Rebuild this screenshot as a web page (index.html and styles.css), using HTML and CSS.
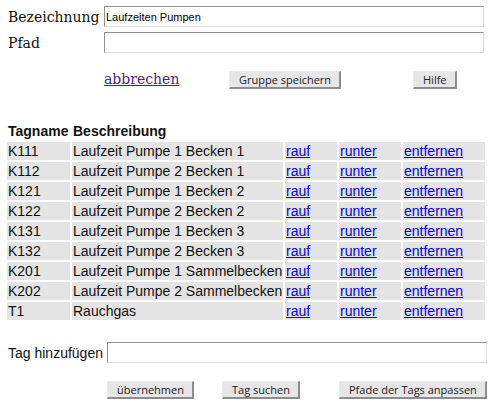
FILE: index.html
```html
<!DOCTYPE html>
<html lang="de">
<head>
<meta charset="utf-8">
<title>Gruppe bearbeiten</title>
<link rel="stylesheet" href="styles.css">
</head>
<body>
<form class="group-form">
  <div class="fields">
    <label class="field-label" for="bez">Bezeichnung</label>
    <input class="text-input" id="bez" type="text" value="Laufzeiten Pumpen">
    <label class="field-label" for="pfad">Pfad</label>
    <input class="text-input" id="pfad" type="text" value="">
  </div>
  <div class="actions">
    <a class="cancel-link" href="#">abbrechen</a>
    <span><button class="btn" type="button">Gruppe speichern</button></span>
    <span><button class="btn" type="button">Hilfe</button></span>
  </div>
</form>

<table class="tags">
  <thead>
    <tr>
      <th class="c-name">Tagname</th>
      <th class="c-desc">Beschreibung</th>
      <th class="c-up"></th>
      <th class="c-down"></th>
      <th class="c-del"></th>
    </tr>
  </thead>
  <tbody>
    <tr><td>K111</td><td>Laufzeit Pumpe 1 Becken 1</td><td><a href="#">rauf</a></td><td><a href="#">runter</a></td><td><a href="#">entfernen</a></td></tr>
    <tr><td>K112</td><td>Laufzeit Pumpe 2 Becken 1</td><td><a href="#">rauf</a></td><td><a href="#">runter</a></td><td><a href="#">entfernen</a></td></tr>
    <tr><td>K121</td><td>Laufzeit Pumpe 1 Becken 2</td><td><a href="#">rauf</a></td><td><a href="#">runter</a></td><td><a href="#">entfernen</a></td></tr>
    <tr><td>K122</td><td>Laufzeit Pumpe 2 Becken 2</td><td><a href="#">rauf</a></td><td><a href="#">runter</a></td><td><a href="#">entfernen</a></td></tr>
    <tr><td>K131</td><td>Laufzeit Pumpe 1 Becken 3</td><td><a href="#">rauf</a></td><td><a href="#">runter</a></td><td><a href="#">entfernen</a></td></tr>
    <tr><td>K132</td><td>Laufzeit Pumpe 2 Becken 3</td><td><a href="#">rauf</a></td><td><a href="#">runter</a></td><td><a href="#">entfernen</a></td></tr>
    <tr><td>K201</td><td>Laufzeit Pumpe 1 Sammelbecken</td><td><a href="#">rauf</a></td><td><a href="#">runter</a></td><td><a href="#">entfernen</a></td></tr>
    <tr><td>K202</td><td>Laufzeit Pumpe 2 Sammelbecken</td><td><a href="#">rauf</a></td><td><a href="#">runter</a></td><td><a href="#">entfernen</a></td></tr>
    <tr><td>T1</td><td>Rauchgas</td><td><a href="#">rauf</a></td><td><a href="#">runter</a></td><td><a href="#">entfernen</a></td></tr>
  </tbody>
</table>

<div class="add-row">
  <label class="add-label" for="tag">Tag hinzufügen</label>
  <input class="text-input" id="tag" type="text" value="">
</div>
<div class="bottom-actions">
  <span><button class="btn" type="button">übernehmen</button></span>
  <span><button class="btn" type="button">Tag suchen</button></span>
  <span><button class="btn" type="button">Pfade der Tags anpassen</button></span>
</div>
</body>
</html>
```

FILE: styles.css
```css
html, body {
  margin: 0;
  padding: 0;
  background: #ffffff;
}

body {
  font-family: "DejaVu Serif", serif;
  font-size: 14px;
  color: #111111;
}

.group-form {
  margin: 0;
}

.fields {
  display: grid;
  grid-template-columns: 96px 380px;
  grid-auto-rows: 21px;
  row-gap: 5px;
  align-items: center;
  padding: 6px 0 0 8px;
}

.field-label {
  font-family: "DejaVu Serif", serif;
  font-size: 14px;
  line-height: 16px;
}

.text-input {
  box-sizing: border-box;
  height: 21px;
  width: 380px;
  margin: 0;
  padding: 0 1px;
  border-style: solid;
  border-width: 1px;
  border-color: #8f8f8f #dedede #dedede #8f8f8f;
  background: #ffffff;
  font-family: "Liberation Sans", Arial, sans-serif;
  font-size: 11px;
  color: #000000;
  outline: none;
}

.actions {
  display: grid;
  grid-template-columns: 125px 184px auto;
  align-items: baseline;
  height: 18px;
  margin-top: 18px;
  padding-left: 104px;
}

.cancel-link {
  font-family: "DejaVu Serif", serif;
  font-size: 14px;
  line-height: 16px;
  color: #551a8b;
}

.btn {
  box-sizing: border-box;
  height: 18px;
  margin: 0;
  padding: 0 8px 0 9px;
  border-style: solid;
  border-width: 1px 2px 2px 1px;
  border-color: #ececec #8c8c8c #8c8c8c #ececec;
  background: #e6e6e6;
  font-family: "Open Sans", "Noto Sans", sans-serif;
  font-size: 11px;
  line-height: 15px;
  color: #222222;
  white-space: nowrap;
}

.tags {
  table-layout: fixed;
  width: 482px;
  margin: 31px 0 0 5px;
  border-collapse: separate;
  border-spacing: 2px;
  font-family: "Liberation Sans", Arial, sans-serif;
  font-size: 14px;
  line-height: 16px;
  color: #111111;
}

.tags th,
.tags td {
  box-sizing: border-box;
  padding: 1px;
  text-align: left;
  white-space: nowrap;
  overflow: hidden;
}

.tags th {
  font-weight: bold;
}

.tags td {
  background: #e4e4e4;
}

.tags a {
  color: #0000ee;
}

.c-name { width: 63px; }
.c-desc { width: 211px; }
.c-up { width: 52px; }
.c-down { width: 62px; }
.c-del { width: 82px; }

.add-row {
  display: grid;
  grid-template-columns: 99px 380px;
  align-items: center;
  height: 21px;
  margin-top: 20px;
  padding-left: 8px;
}

.add-label {
  font-family: "Liberation Sans", Arial, sans-serif;
  font-size: 14px;
  line-height: 16px;
  color: #111111;
  white-space: nowrap;
}

.bottom-actions {
  display: grid;
  grid-template-columns: 115px 117px auto;
  height: 18px;
  margin-top: 18px;
  padding-left: 107px;
}
```
